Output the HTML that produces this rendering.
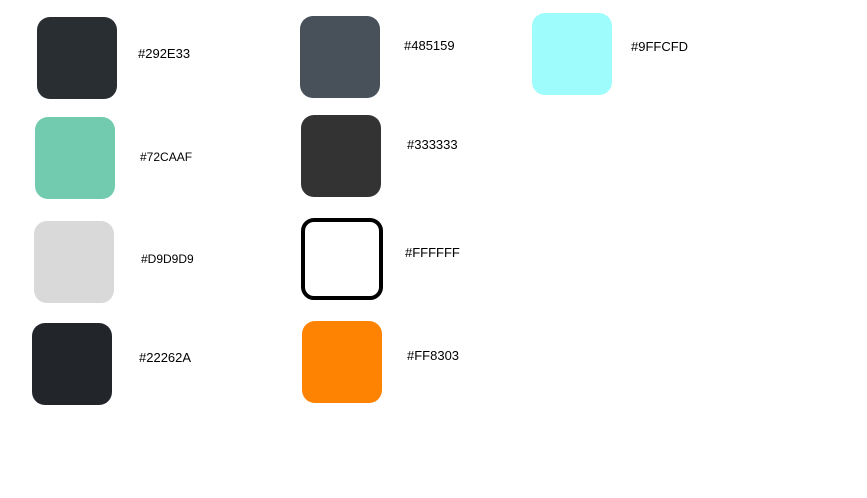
<!DOCTYPE html>
<html><head><style>
body{margin:0;width:867px;height:498px;background:#fff;position:relative;overflow:hidden;font-family:"Liberation Sans",sans-serif;color:#000}
.b{position:absolute;width:80px;height:82px;border-radius:13px;box-sizing:border-box}
.t{position:absolute;font-size:13px;line-height:14px;transform:translateY(-6px)}
.s{font-size:12px}
</style></head><body>
<div class="b" style="left:37px;top:17px;background:#292E33"></div><div class="t" style="left:138px;top:53px">#292E33</div>
<div class="b" style="left:35px;top:117px;background:#72CAAF"></div><div class="t s" style="left:140px;top:156px">#72CAAF</div>
<div class="b" style="left:34px;top:221px;background:#D9D9D9"></div><div class="t s" style="left:141px;top:258px">#D9D9D9</div>
<div class="b" style="left:32px;top:323px;background:#22262A"></div><div class="t" style="left:139px;top:357px">#22262A</div>
<div class="b" style="left:300px;top:16px;background:#485159"></div><div class="t" style="left:404px;top:45px">#485159</div>
<div class="b" style="left:301px;top:115px;background:#333333"></div><div class="t" style="left:407px;top:144px">#333333</div>
<div class="b" style="left:301px;top:218px;width:82px;border:4px solid #000;background:#fff"></div><div class="t" style="left:405px;top:252px">#FFFFFF</div>
<div class="b" style="left:302px;top:321px;background:#FF8303"></div><div class="t" style="left:407px;top:355px">#FF8303</div>
<div class="b" style="left:532px;top:13px;background:#9FFCFD"></div><div class="t" style="left:631px;top:46px">#9FFCFD</div>
</body></html>
